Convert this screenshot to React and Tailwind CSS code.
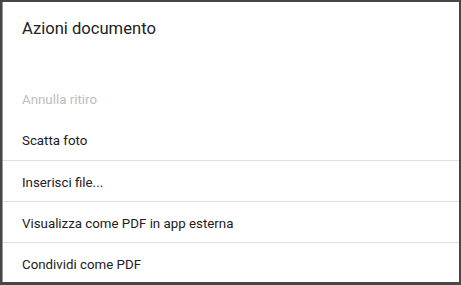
export default function App() {
  const items = [
    { label: 'Annulla ritiro', disabled: true },
    { label: 'Scatta foto' },
    { label: 'Inserisci file...', divider: true },
    { label: 'Visualizza come PDF in app esterna', divider: true },
    { label: 'Condividi come PDF', divider: true },
  ]

  return (
    <div
      className="h-[285px] w-[461px] bg-[#474747] pt-[2px] pl-[2px] pr-[2px] pb-[3px]"
      style={{ fontFamily: 'Roboto, "Noto Sans", sans-serif' }}
    >
      <div className="flex h-full flex-col overflow-hidden border-l border-[#9a9a9a] bg-white">
        {/* Title */}
        <div className="h-[76px] shrink-0 pl-[19px] pt-[15px]">
          <h2 className="text-[16.6px] leading-6 text-[#212121]">Azioni documento</h2>
        </div>

        {/* Actions */}
        <ul className="flex flex-col">
          {items.map((item) => (
            <li
              key={item.label}
              className={
                'flex h-[41px] shrink-0 items-center pl-[19px] pt-[3px] text-[13.3px] ' +
                (item.divider ? 'border-t border-[#e0e0e0] ' : '') +
                (item.disabled ? 'text-[#bdbdbd]' : 'text-[#212121]')
              }
            >
              {item.label}
            </li>
          ))}
        </ul>
      </div>
    </div>
  )
}
